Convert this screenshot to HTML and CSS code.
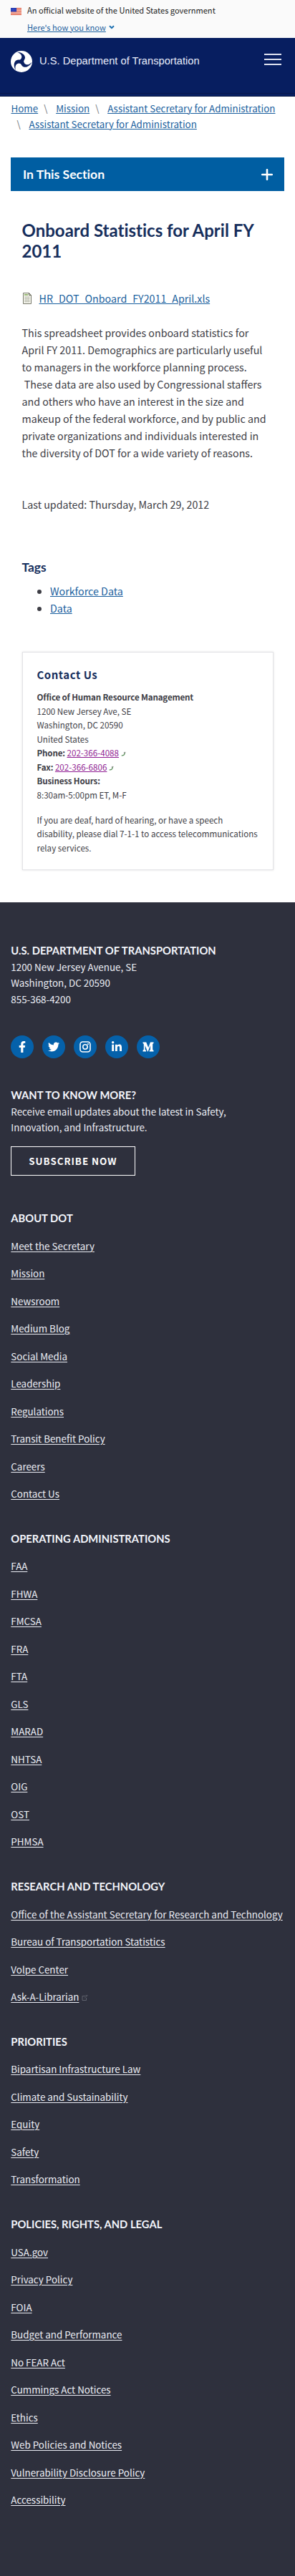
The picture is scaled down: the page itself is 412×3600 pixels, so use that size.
FILE: index.html
```
<!DOCTYPE html>
<html lang="en">
<head>
<meta charset="utf-8">
<meta name="viewport" content="width=device-width, initial-scale=1">
<title>Onboard Statistics for April FY 2011 | US Department of Transportation</title>
<link rel="stylesheet" href="styles.css">
</head>
<body>
<section class="banner">
  <svg class="flag" viewBox="0 0 15 10"><rect width="15" height="10" fill="#fff"/><path d="M0 .5h15M0 2.3h15M0 4.1h15M0 5.9h15M0 7.7h15M0 9.5h15" stroke="#db3e1f" stroke-width=".95"/><rect width="8" height="5.4" fill="#1e33b1"/><path d="M1 1.3h6M1 2.8h6M1 4.2h6" stroke="#8fa0e8" stroke-width=".5" stroke-dasharray=".8 .8"/></svg>
  <div class="banner-text">
    <p>An official website of the United States government</p>
    <p><a href="#">Here's how you know</a><svg class="chevron" viewBox="0 0 8 6"><path d="M1 1.2l3 3 3-3" fill="none" stroke="#1a6fb0" stroke-width="2"/></svg></p>
  </div>
</section>
<header class="header">
  <a class="brand" href="#">
    <svg class="logo" viewBox="0 0 30 30"><circle cx="15" cy="15" r="15" fill="#fff"/><g fill="#0a1f62" transform="rotate(6 15 15)"><path id="arm" d="M6.800 2.600C13.500 2 18.600 4.600 19.400 8.800C19.800 11.500 17.800 13 18 15.500L15 18L12 15.200C12.400 12.500 15 11 14.600 8.200C14.200 5.600 12 3.600 6.800 2.600Z"/><use href="#arm" transform="rotate(120 15 15)"/><use href="#arm" transform="rotate(240 15 15)"/></g></svg>
    <span>U.S. Department of Transportation</span>
  </a>
  <button class="menu" aria-label="Menu"><i></i><i></i><i></i></button>
</header>
<ol class="crumbs">
  <li><a href="#">Home</a></li><li><a href="#">Mission</a></li><li><a href="#">Assistant Secretary for Administration</a></li><li><a href="#">Assistant Secretary for Administration</a></li>
</ol>
<div class="section-nav"><span>In This Section</span><svg viewBox="0 0 16 16"><path d="M8 1.2v13.6M1.2 8h13.6" stroke="#fff" stroke-width="2.6" stroke-linecap="round"/></svg></div>
<main class="main">
  <h1>Onboard Statistics for April FY 2011</h1>
  <p class="file"><svg viewBox="0 0 12 16"><path d="M.5.5h8l3 3v12H.5z" fill="#f8f8f0" stroke="#77786a"/><path d="M8.5.5v3h3" fill="none" stroke="#5a5c4c"/><path d="M2 3h5" stroke="#6b9a3c" stroke-width="1.4"/><path d="M2 6h8M2 8.2h8M2 10.4h8M2 12.6h8M4.2 5.5v8M7.2 5.5v8" stroke="#a9aa9c" stroke-width=".7"/></svg><a href="#">HR_DOT_Onboard_FY2011_April.xls</a></p>
  <p>This spreadsheet provides onboard statistics for April FY 2011. Demographics are particularly useful to managers in the workforce planning process. &nbsp;These data are also used by Congressional staffers and others who have an interest in the size and makeup of the federal workforce, and by public and private organizations and individuals interested in the diversity of DOT for a wide variety of reasons.</p>
  <p class="updated">Last updated: Thursday, March 29, 2012</p>
  <h2>Tags</h2>
  <ul class="tags"><li><a href="#">Workforce Data</a></li><li><a href="#">Data</a></li></ul>
  <aside class="card">
    <h3>Contact Us</h3>
    <p><b>Office of Human Resource Management</b><br>1200 New Jersey Ave, SE<br>Washington, DC 20590<br>United States<br><b>Phone:</b> <a href="#">202-366-4088</a><svg viewBox="0 0 8 8"><path d="M.8 6.6C3.6 7 5.6 5.4 6.3 2.4" fill="none" stroke="#5b8f5b" stroke-width="1.5"/><path d="M5 3.4V1.6h2.4" fill="none" stroke="#7d817d"/></svg><br><b>Fax:</b> <a href="#">202-366-6806</a><svg viewBox="0 0 8 8"><path d="M.8 6.6C3.6 7 5.6 5.4 6.3 2.4" fill="none" stroke="#5b8f5b" stroke-width="1.5"/><path d="M5 3.4V1.6h2.4" fill="none" stroke="#7d817d"/></svg><br><b>Business Hours:</b><br>8:30am-5:00pm ET, M-F</p>
    <p>If you are deaf, hard of hearing, or have a speech disability, please dial 7-1-1 to access telecommunications relay services.</p>
  </aside>
</main>
<footer class="footer">
  <section>
    <h4>U.S. DEPARTMENT OF TRANSPORTATION</h4>
    <p>1200 New Jersey Avenue, SE<br>Washington, DC 20590<br>855-368-4200</p>
  </section>
  <div class="social">
    <a href="#" aria-label="Facebook"><svg viewBox="0 0 320 512"><path d="M279.140 288l14.220-92.660h-88.910v-60.130c0-25.350 12.420-50.060 52.240-50.060h40.420V6.260S260.430 0 225.360 0c-73.220 0-121.080 44.380-121.080 124.720v70.620H22.890V288h81.390v224h100.170V288z"/></svg></a>
    <a href="#" aria-label="Twitter"><svg viewBox="0 0 512 512"><path d="M459.370 151.716c.325 4.548.325 9.097.325 13.645 0 138.720-105.583 298.558-298.558 298.558-59.452 0-114.680-17.219-161.137-47.106 8.447.974 16.568 1.299 25.340 1.299 49.055 0 94.213-16.568 130.274-44.832-46.132-.975-84.792-31.188-98.112-72.772 6.498.974 12.995 1.624 19.818 1.624 9.421 0 18.843-1.300 27.614-3.573-48.081-9.747-84.143-51.980-84.143-102.985v-1.299c13.969 7.797 30.214 12.670 47.431 13.319-28.264-18.843-46.781-51.005-46.781-87.391 0-19.492 5.197-37.360 14.294-52.954 51.655 63.675 129.300 105.258 216.365 109.807-1.624-7.797-2.599-15.918-2.599-24.040 0-57.828 46.782-104.934 104.934-104.934 30.213 0 57.502 12.670 76.670 33.137 23.715-4.548 46.456-13.320 66.599-25.340-7.798 24.366-24.366 44.833-46.132 57.827 21.117-2.273 41.584-8.122 60.426-16.243-14.292 20.791-32.161 39.308-52.628 54.253z"/></svg></a>
    <a href="#" aria-label="Instagram"><svg viewBox="0 0 16 16"><rect x="1" y="1" width="14" height="14" rx="3.5" fill="none" stroke="#fff" stroke-width="1.6"/><circle cx="8" cy="8" r="3.2" fill="none" stroke="#fff" stroke-width="1.6"/><circle cx="12" cy="4" r="1"/></svg></a>
    <a href="#" aria-label="LinkedIn"><svg class="small" viewBox="0 0 448 512"><path d="M100.280 448H7.400V148.900h92.880zM53.790 108.100C24.090 108.100 0 83.500 0 53.800a53.790 53.790 0 0 1 107.580 0c0 29.700-24.100 54.300-53.790 54.300zM447.900 448h-92.680V302.400c0-34.700-.7-79.200-48.290-79.200-48.290 0-55.690 37.700-55.690 76.700V448h-92.780V148.900h89.080v40.800h1.300c12.400-23.500 42.690-48.300 87.880-48.300 94 0 111.280 61.900 111.280 142.300V448z"/></svg></a>
    <a href="#" aria-label="Medium"><svg viewBox="0 0 16 14"><path d="M.5.500h4.700L8.200 8 11 .500h4.500V2l-1.300 1v8l1.300 1v1.500H9.700V12l1.300-1V5L7.700 13.500H7L3.600 5v5.700L5 12v1.500H.5V12l1.300-1.300V3L.5 2z"/></svg></a>
  </div>
  <section>
    <h4>WANT TO KNOW MORE?</h4>
    <p>Receive email updates about the latest in Safety,<br>Innovation, and Infrastructure.</p>
    <a class="subscribe" href="#">SUBSCRIBE NOW</a>
  </section>
  <nav class="links">
    <section><h4>ABOUT DOT</h4><ul>
      <li><a href="#">Meet the Secretary</a></li><li><a href="#">Mission</a></li><li><a href="#">Newsroom</a></li><li><a href="#">Medium Blog</a></li><li><a href="#">Social Media</a></li><li><a href="#">Leadership</a></li><li><a href="#">Regulations</a></li><li><a href="#">Transit Benefit Policy</a></li><li><a href="#">Careers</a></li><li><a href="#">Contact Us</a></li></ul></section>
    <section><h4>OPERATING ADMINISTRATIONS</h4><ul>
      <li><a href="#">FAA</a></li><li><a href="#">FHWA</a></li><li><a href="#">FMCSA</a></li><li><a href="#">FRA</a></li><li><a href="#">FTA</a></li><li><a href="#">GLS</a></li><li><a href="#">MARAD</a></li><li><a href="#">NHTSA</a></li><li><a href="#">OIG</a></li><li><a href="#">OST</a></li><li><a href="#">PHMSA</a></li></ul></section>
    <section><h4>RESEARCH AND TECHNOLOGY</h4><ul>
      <li><a href="#">Office of the Assistant Secretary for Research and Technology</a></li><li><a href="#">Bureau of Transportation Statistics</a></li><li><a href="#">Volpe Center</a></li><li><a href="#">Ask-A-Librarian</a><svg class="ext" viewBox="0 0 9 8"><path d="M5 1.5H1v6h5.500V4M4 4.500L7.500 1M5.500.800h3" fill="none" stroke="#5f626d"/></svg></li></ul></section>
    <section><h4>PRIORITIES</h4><ul>
      <li><a href="#">Bipartisan Infrastructure Law</a></li><li><a href="#">Climate and Sustainability</a></li><li><a href="#">Equity</a></li><li><a href="#">Safety</a></li><li><a href="#">Transformation</a></li></ul></section>
    <section><h4>POLICIES, RIGHTS, AND LEGAL</h4><ul>
      <li><a href="#">USA.gov</a></li><li><a href="#">Privacy Policy</a></li><li><a href="#">FOIA</a></li><li><a href="#">Budget and Performance</a></li><li><a href="#">No FEAR Act</a></li><li><a href="#">Cummings Act Notices</a></li><li><a href="#">Ethics</a></li><li><a href="#">Web Policies and Notices</a></li><li><a href="#">Vulnerability Disclosure Policy</a></li><li><a href="#">Accessibility</a></li></ul></section>
  </nav>
</footer>
</body>
</html>
```
FILE: styles.css
```
*, *::before { box-sizing: border-box; }
body, h1, h2, h3, h4, p, ul, ol { margin: 0; padding: 0; }
body {
  font: 14.28px/24px "Noto Sans CJK SC", "Noto Sans", sans-serif;
  color: #3d3d45;
  background: #fff;
}
ul, ol { list-style: none; }
a {
  color: #1a5f9e;
  text-decoration: underline;
  text-decoration-thickness: 1px;
  text-underline-offset: 1px;
}

/* Government banner */
.banner {
  display: flex;
  height: 53px;
  padding: 5px 15px 0;
  background: #fafafa;
  color: #1b1b1b;
  font-size: 11.09px;
  line-height: 18px;
}
.flag { width: 15px; height: 10px; margin: 6px 8px 0 0; }
.banner-text { display: grid; gap: 6px; align-content: start; }
.chevron { width: 8px; height: 6px; margin: 0 0 2px 4px; }

/* Site header */
.header {
  display: flex;
  justify-content: space-between;
  align-items: flex-start;
  height: 82px;
  padding: 18px 19px 0 15px;
  background: linear-gradient(#071e60 0 77px, #09184a 77px 78px, #071e60 78px 81px, #0b1c48 81px);
}
.brand {
  display: flex;
  align-items: center;
  gap: 10px;
  color: #e9edfb;
  text-decoration: none;
  font: 14.69px/28px "Liberation Sans", Arial, sans-serif;
}
.brand span { padding-bottom: 2px; }
.logo { width: 30px; height: 30px; }
.menu {
  display: grid;
  gap: 5px;
  width: 24px;
  margin-top: 4px;
  padding: 0;
  border: 0;
  background: none;
}
.menu i { height: 2px; background: #dfe3f0; }

/* Breadcrumb */
.crumbs {
  display: flex;
  flex-wrap: wrap;
  padding: 5px 15px 36px 15.5px;
  font-size: 13.38px;
  line-height: 22px;
}
.crumbs li { display: flex; white-space: nowrap; }
.crumbs li + li::before {
  content: "\\";
  width: 25px;
  padding-left: 8px;
  color: #71767a;
}

.section-nav {
  display: flex;
  align-items: center;
  justify-content: space-between;
  height: 47px;
  margin: 0 15px;
  padding: 0 16px 0 17px;
  background: #005ea2;
  color: #fff;
  font: bold 17.6px/24px Lato, sans-serif;
  font-variant-ligatures: none;
}
.section-nav svg { width: 16px; height: 16px; }

/* Article */
.main { padding: 40px 30.5px 45px; }
h1, h2 {
  color: #162e5c;
  font: bold 24px/29px Lato, sans-serif;
  font-variant-ligatures: none;
}
.file { display: flex; align-items: center; margin: 40px 0 24px; }
.file svg { width: 12px; height: 16px; margin: 0 10.5px 0 1.5px; }
.updated { margin-top: 48px; }
h2 { margin-top: 64px; font-size: 17.4px; line-height: 23px; }
.tags { margin: 10px 0 0 39.5px; list-style: disc; }

.card {
  margin-top: 49px;
  padding: 20.5px 20px 20px;
  border: 1px solid #e3e3e6;
  box-shadow: 0 0 3px rgba(0, 0, 0, .12);
  font-size: 11.62px;
  line-height: 19.5px;
}
.card h3 {
  margin-bottom: 12.5px;
  color: #162e5c;
  font-size: 15px;
  line-height: 20px;
  letter-spacing: .5px;
}
.card p + p { margin-top: 15.5px; }
.card b { letter-spacing: -.17px; }
.card a { color: #8f1c92; }
.card svg { width: 7px; height: 7px; margin-left: 3px; }

/* Footer */
.footer {
  min-height: 2339px;
  padding: 56px 15.3px 0;
  background: #2e303d;
  color: #eceef5;
  font-size: 13.4px;
  line-height: 22.5px;
}
.footer a { color: #eceef5; text-underline-offset: 1.5px; }
.footer h4 { color: #f4f6fc; font: bold 14.75px/22.5px Lato, sans-serif; }
.social { display: flex; gap: 12px; margin: 40px 0; }
.social a {
  display: grid;
  place-items: center;
  width: 32px;
  height: 32px;
  border-radius: 50%;
  background: #0561aa;
}
.social svg { width: 16px; height: 16px; fill: #fff; }
.footer .subscribe {
  display: inline-block;
  height: 41px;
  margin-top: 15px;
  padding: 0 24px;
  border: 1px solid #fff;
  color: #fff;
  font-weight: bold;
  line-height: 38.5px;
  letter-spacing: .95px;
  text-decoration: none;
  vertical-align: top;
}
.links { display: grid; gap: 40.3px; margin-top: 48.5px; }
.links h4 { margin-bottom: 16px; }
.links ul { display: grid; gap: 16px; }
.links li { white-space: nowrap; }
.ext { width: 9px; height: 8px; margin-left: 4px; }
```
